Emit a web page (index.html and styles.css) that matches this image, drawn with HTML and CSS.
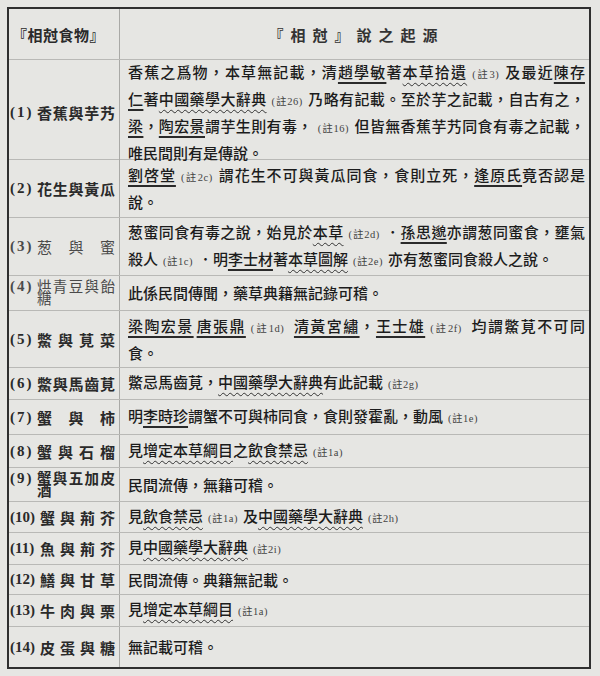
FILE: index.html
```html
<!DOCTYPE html>
<html lang="zh-Hant">
<head>
<meta charset="utf-8">
<title>相尅食物</title>
<link rel="stylesheet" href="styles.css">
</head>
<body>
<div class="sheet">
  <div class="row head">
    <div class="c1 hleft">『相尅食物』</div>
    <div class="c2 title">『相尅』說之起源</div>
  </div>

  <div class="row">
    <div class="c1"><span class="num">(1)</span><span class="nm">香蕉與芋艿</span></div>
    <div class="c2">
      <div class="ln">香蕉之爲物，本草無記載，清<u>趙學敏</u>著<w class="wv">本草拾遺</w><span class="nt">(註3)</span>及最近<u>陳存</u></div>
      <div class="ln"><u>仁</u>著<w class="wv">中國藥學大辭典</w><span class="nt">(註26)</span>乃略有記載。至於芋之記載，自古有之，</div>
      <div class="ln"><u>梁</u>，<u>陶宏景</u>謂芋生則有毒，<span class="nt">(註16)</span>但皆無香蕉芋艿同食有毒之記載，</div>
      <div class="ln end">唯民間則有是傳說。</div>
    </div>
  </div>

  <div class="row">
    <div class="c1"><span class="num">(2)</span><span class="nm">花生與黃瓜</span></div>
    <div class="c2">
      <div class="ln"><u>劉啓堂</u><span class="nt">(註2c)</span>謂花生不可與黃瓜同食，食則立死，<u>逢原氏</u>竟否認是</div>
      <div class="ln end">說。</div>
    </div>
  </div>

  <div class="row">
    <div class="c1 lt"><span class="num">(3)</span><span class="nm">葱與蜜</span></div>
    <div class="c2">
      <div class="ln">葱蜜同食有毒之說，始見於<w class="wv">本草</w><span class="nt">(註2d)</span>．<u>孫思邈</u>亦謂葱同蜜食，壅氣</div>
      <div class="ln end">殺人<span class="nt">(註1c)</span>．明<u>李士材</u>著<w class="wv">本草圖解</w><span class="nt">(註2e)</span>亦有葱蜜同食殺人之說。</div>
    </div>
  </div>

  <div class="row">
    <div class="c1 lt wrapcell"><span class="num">(4)</span><span class="nm wrap">烘青豆與飴糖</span></div>
    <div class="c2"><div class="ln end">此係民間傳聞，藥草典籍無記錄可稽。</div></div>
  </div>

  <div class="row">
    <div class="c1"><span class="num">(5)</span><span class="nm">鱉與莧菜</span></div>
    <div class="c2">
      <div class="ln"><u>梁陶宏景</u><u class="gap">唐張鼎</u><span class="nt">(註1d)</span> <u>清黃宮繡</u>，<u>王士雄</u><span class="nt">(註2f)</span> 均謂鱉莧不可同</div>
      <div class="ln end">食。</div>
    </div>
  </div>

  <div class="row">
    <div class="c1"><span class="num">(6)</span><span class="nm">鱉與馬齒莧</span></div>
    <div class="c2"><div class="ln end">鱉忌馬齒莧，<w class="wv">中國藥學大辭典</w>有此記載<span class="nt">(註2g)</span></div></div>
  </div>

  <div class="row">
    <div class="c1"><span class="num">(7)</span><span class="nm">蟹與柿</span></div>
    <div class="c2"><div class="ln end">明<u>李時珍</u>謂蟹不可與柿同食，食則發霍亂，動風<span class="nt">(註1e)</span></div></div>
  </div>

  <div class="row">
    <div class="c1"><span class="num">(8)</span><span class="nm">蟹與石榴</span></div>
    <div class="c2"><div class="ln end">見<w class="wv">增定本草綱目</w>之<w class="wv">飲食禁忌</w><span class="nt">(註1a)</span></div></div>
  </div>

  <div class="row">
    <div class="c1 wrapcell"><span class="num">(9)</span><span class="nm wrap">蟹與五加皮酒</span></div>
    <div class="c2"><div class="ln end">民間流傳，無籍可稽。</div></div>
  </div>

  <div class="row">
    <div class="c1"><span class="num n2">(10)</span><span class="nm">蟹與荊芥</span></div>
    <div class="c2"><div class="ln end">見<w class="wv">飲食禁忌</w><span class="nt">(註1a)</span>及<w class="wv">中國藥學大辭典</w><span class="nt">(註2h)</span></div></div>
  </div>

  <div class="row">
    <div class="c1"><span class="num n2">(11)</span><span class="nm">魚與荊芥</span></div>
    <div class="c2"><div class="ln end">見<w class="wv">中國藥學大辭典</w><span class="nt">(註2i)</span></div></div>
  </div>

  <div class="row">
    <div class="c1"><span class="num n2">(12)</span><span class="nm">鱔與甘草</span></div>
    <div class="c2"><div class="ln end">民間流傳。典籍無記載。</div></div>
  </div>

  <div class="row">
    <div class="c1"><span class="num n2">(13)</span><span class="nm">牛肉與栗</span></div>
    <div class="c2"><div class="ln end">見<w class="wv">增定本草綱目</w><span class="nt">(註1a)</span></div></div>
  </div>

  <div class="row last">
    <div class="c1"><span class="num n2">(14)</span><span class="nm">皮蛋與糖</span></div>
    <div class="c2"><div class="ln end">無記載可稽。</div></div>
  </div>
</div>
</body>
</html>
```

FILE: styles.css
```css
html, body {
  margin: 0;
  padding: 0;
  background: #e6e6e3;
}

body {
  font-family: "Noto Sans CJK TC", "Noto Sans CJK SC", sans-serif;
  color: #1c1c1c;
  font-size: 15px;
}

.sheet {
  margin: 7px 0 0 7px;
  width: 584px;
  box-sizing: border-box;
  border: 2px solid #2f2f2f;
  display: grid;
  grid-template-rows: 51px 100px 58px 58px 35px 57px 32px 35px 33px 34px 31px 32px 30px 32px 40px;
}

.row {
  display: grid;
  grid-template-columns: 111px 1fr;
  border-bottom: 1px solid #b9b9b6;
  box-sizing: border-box;
  min-height: 0;
}

.row.last {
  border-bottom: none;
}

.c1 {
  border-right: 1px solid #a9a9a6;
  display: flex;
  align-items: center;
  padding: 0 4px 0 1px;
  font-weight: 700;
  color: #2a2a2a;
}

.c1.lt {
  font-weight: 400;
  color: #4a4a4a;
}

.c2 {
  display: flex;
  flex-direction: column;
  justify-content: center;
  padding: 0 4px 0 8px;
  line-height: 24px;
  min-width: 0;
  font-weight: 500;
}

.head .c1 {
  justify-content: flex-start;
  padding-left: 3px;
  padding-top: 1px;
}

.hleft {
  font-size: 15px;
  letter-spacing: 0.5px;
}

.title {
  align-items: center;
  font-weight: 700;
  letter-spacing: 7px;
  color: #333;
  padding-top: 1px;
}

.num {
  font-family: "Liberation Serif", serif;
  font-weight: 700;
  font-size: 15px;
  letter-spacing: 2px;
  flex: none;
  width: 27px;
}

.num.n2 {
  letter-spacing: 0;
  width: 30px;
}

.nm {
  flex: 1;
  text-align: justify;
  text-align-last: justify;
  white-space: nowrap;
}

.wrapcell {
  align-items: flex-start;
  padding-top: 3px;
}

.wrapcell .num {
  line-height: 14px;
}

.nm.wrap {
  white-space: normal;
  text-align-last: left;
  font-size: 14.5px;
  line-height: 12px;
  padding-top: 1px;
}

.ln {
  text-align: justify;
  text-align-last: justify;
  white-space: nowrap;
}

.ln.end {
  text-align-last: left;
}

u {
  text-decoration: underline solid #2a2a2a;
  text-decoration-thickness: 1.5px;
  text-underline-offset: 4px;
}

u.gap {
  margin-left: 3px;
}

w.wv {
  text-decoration: underline wavy #333;
  text-decoration-thickness: 1px;
  text-underline-offset: 4px;
}

.nt {
  font-family: "Liberation Serif", "Noto Sans CJK TC", serif;
  font-size: 10.5px;
  font-weight: 400;
  color: #444;
  margin: 0 5px;
  letter-spacing: 0.5px;
}
```
